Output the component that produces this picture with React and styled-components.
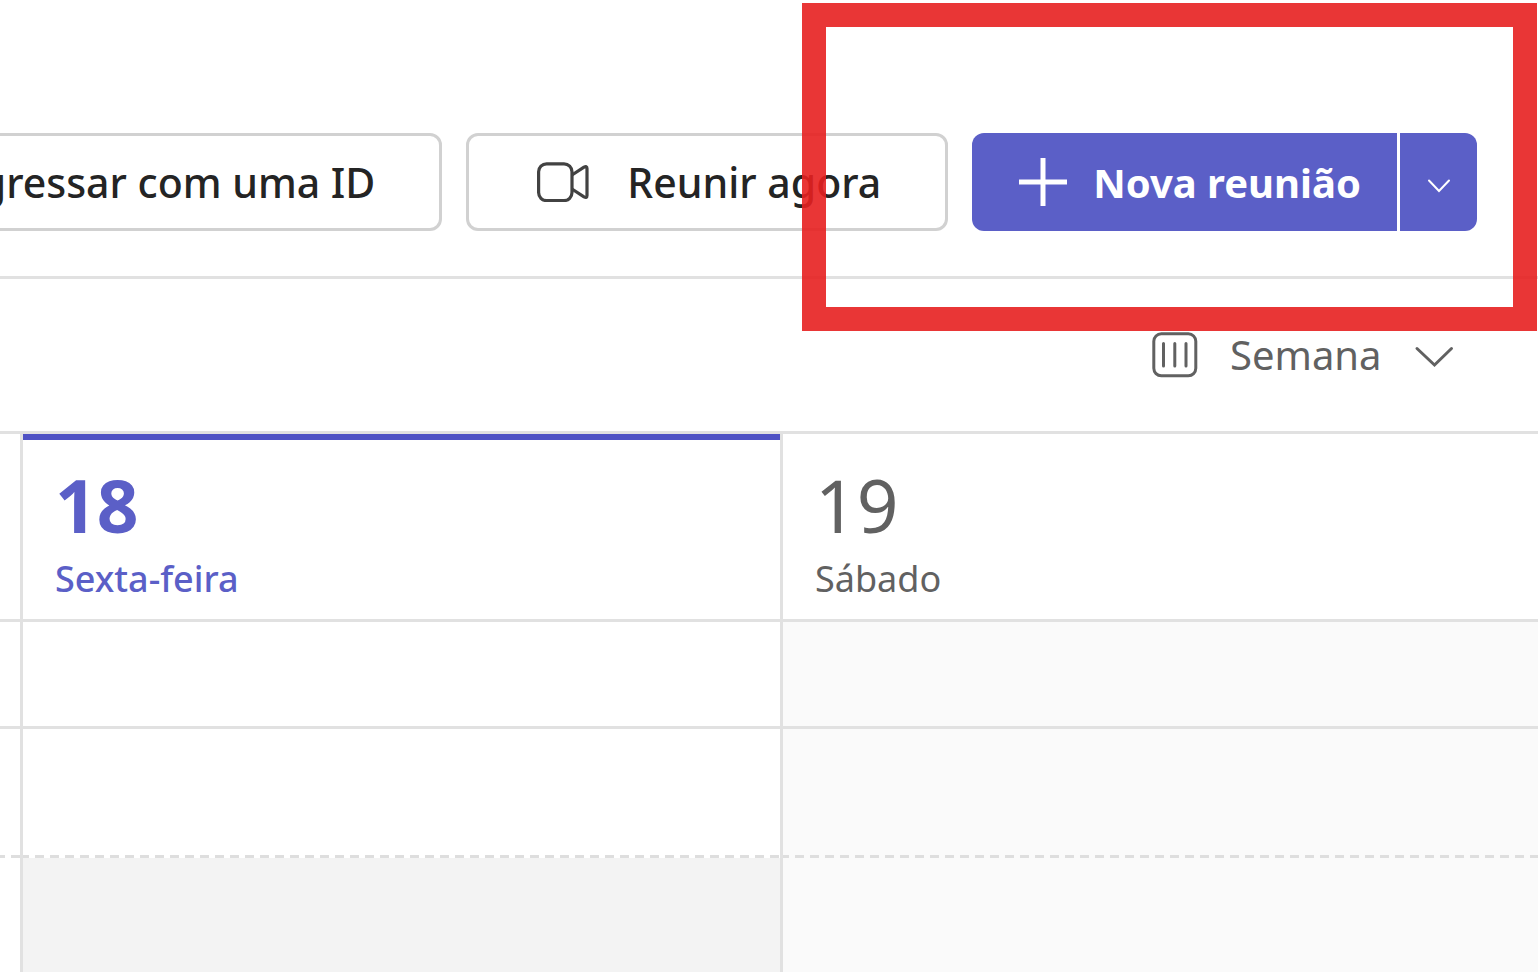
import styled, { createGlobalStyle } from "styled-components";
import { useState } from "react";

const GlobalStyle = createGlobalStyle`
  * {
    box-sizing: border-box;
  }
  body {
    margin: 0;
    background-color: #fff;
    font-family: "Segoe UI", "Noto Sans", "Open Sans", sans-serif;
    color: #242424;
  }
  button,
  select {
    font-family: inherit;
    cursor: pointer;
  }
`;

const Page = styled.div`
  position: relative;
  display: flex;
  flex-direction: column;
  min-height: 100vh;
  overflow: hidden;
`;

const Toolbar = styled.header`
  display: flex;
  justify-content: flex-end;
  gap: 24px;
  padding: 133px 61px 45px 0;
  border-bottom: 3px solid #e1e1e1;
`;

const Button = styled.button`
  display: flex;
  align-items: center;
  flex-shrink: 0;
  gap: 38px;
  height: 98px;
  padding: 0 64px 0 68px;
  border: 3px solid #d1d1d1;
  border-radius: 12px;
  background-color: #fff;
  color: #242424;
  font-size: 41px;
  font-weight: 500;
  white-space: nowrap;
`;

const SplitButton = styled.div`
  display: flex;
  flex-shrink: 0;
  height: 98px;
  border-radius: 12px;
  overflow: hidden;
  background-color: #5b5fc7;
`;

const SplitPart = styled.button`
  display: flex;
  align-items: center;
  justify-content: center;
  gap: 26px;
  padding: ${(props) => (props.$small ? "0" : "0 36px 0 47px")};
  width: ${(props) => (props.$small ? "80px" : "auto")};
  border: none;
  border-left: ${(props) => (props.$small ? "3px solid #fff" : "none")};
  background-color: transparent;
  color: #fff;
  font-size: 40px;
  font-weight: 700;
  white-space: nowrap;
`;

const ViewBar = styled.div`
  display: flex;
  justify-content: flex-end;
  align-items: center;
  height: 155px;
  padding-right: 84px;
  border-bottom: 3px solid #e1e1e1;
`;

const ViewPicker = styled.label`
  display: flex;
  align-items: center;
  color: #616161;
  svg {
    flex-shrink: 0;
  }
`;

const ViewSelect = styled.select`
  appearance: none;
  margin: 0 32px;
  padding: 0;
  border: none;
  background-color: transparent;
  color: #616161;
  font-size: 40px;
  line-height: 60px;
`;

const Calendar = styled.main`
  display: grid;
  grid-template-columns: 20px 760fr 758fr;
  flex: 1;
`;

const Day = styled.section`
  display: flex;
  flex-direction: column;
  border-left: ${(props) => (props.$gutter ? "none" : "3px solid #e1e1e1")};
`;

const DayHeader = styled.div`
  height: 188px;
  padding: 22px 32px 0;
  border-top: 6px solid ${(props) => (props.$today ? "#4f52c4" : "transparent")};
  border-bottom: 3px solid #e1e1e1;
  color: ${(props) => (props.$today ? "#5b5fc7" : "#616161")};
`;

const DayNumber = styled.div`
  font-size: 73px;
  line-height: 86px;
  font-weight: ${(props) => (props.$today ? 700 : 400)};
`;

const DayName = styled.div`
  font-size: 36px;
  line-height: 62px;
  font-weight: ${(props) => (props.$today ? 500 : 400)};
`;

const AllDay = styled.div`
  height: 107px;
  border-bottom: 3px solid #e1e1e1;
  background-color: ${(props) => (props.$off ? "#fafafa" : "#fff")};
`;

/* the dashes start on the column line, so the slot reaches under it */
const HalfHour = styled.div`
  height: 129px;
  margin-left: ${(props) => (props.$gutter ? "0" : "-3px")};
  border-left: ${(props) => (props.$gutter ? "none" : "3px solid #e1e1e1")};
  background-color: ${(props) => (props.$off ? "#fafafa" : "#fff")};
  background-image: repeating-linear-gradient(
    ${(props) => (props.$gutter ? "to left" : "to right")},
    #dedede 0 9px,
    transparent 9px 15px
  );
  background-origin: border-box;
  background-size: 100% 3px;
  background-position: bottom;
  background-repeat: no-repeat;
`;

const Rest = styled.div`
  flex: 1;
  background-color: ${(props) => props.$color};
`;

const Highlight = styled.div`
  position: absolute;
  top: 3px;
  right: 1px;
  width: 735px;
  height: 328px;
  border: 24px solid rgba(231, 32, 32, 0.9);
  pointer-events: none;
`;

const VideoIcon = () => (
  <svg width="52" height="40" viewBox="0 0 52 40" fill="none" stroke="#424242" strokeWidth="3.2" strokeLinejoin="round" aria-hidden="true">
    <rect x="1.6" y="1.8" width="33.4" height="36.8" rx="8" />
    <path d="M35 13 L47 5.2 Q50 3.6 50 6.5 V33.5 Q50 36.4 47 34.8 L35 27" />
  </svg>
);

const PlusIcon = () => (
  <svg width="48" height="48" viewBox="0 0 48 48" stroke="#fff" strokeWidth="5" aria-hidden="true">
    <path d="M24 0 V48 M0 24 H48" />
  </svg>
);

const WeekIcon = () => (
  <svg width="46" height="46" viewBox="0 0 46 46" fill="none" stroke="#616161" strokeWidth="3" strokeLinecap="round" aria-hidden="true">
    <rect x="1.8" y="1.8" width="42" height="42" rx="7.5" />
    <path d="M11.5 11.5 V34 M22.8 11.5 V34 M34 11.5 V34" />
  </svg>
);

const ChevronIcon = ({ size, stroke, path }) => (
  <svg width={size} height={size} viewBox={`0 0 ${size} ${size}`} fill="none" stroke="currentColor" strokeWidth={stroke} strokeLinecap="round" aria-hidden="true">
    <path d={path} />
  </svg>
);

const days = [
  { number: 18, name: "Sexta-feira", today: true, off: false, rest: "#f3f3f3" },
  { number: 19, name: "Sábado", today: false, off: true, rest: "#fafafa" },
];

export default function App() {
  const [view, setView] = useState("Semana");

  return (
    <Page>
      <GlobalStyle />
      <Toolbar>
        <Button>Ingressar com uma ID</Button>
        <Button>
          <VideoIcon />
          Reunir agora
        </Button>
        <SplitButton>
          <SplitPart>
            <PlusIcon />
            Nova reunião
          </SplitPart>
          <SplitPart $small aria-label="Mais opções">
            <ChevronIcon size={24} stroke={2} path="M2 10.5 L12 21 L22 10.5" />
          </SplitPart>
        </SplitButton>
      </Toolbar>
      <ViewBar>
        <ViewPicker>
          <WeekIcon />
          <ViewSelect
            aria-label="Vista"
            value={view}
            onChange={(e) => setView(e.target.value)}
          >
            <option>Semana</option>
          </ViewSelect>
          <ChevronIcon size={40} stroke={3} path="M3 13.5 L20.5 30 L37.5 13.5" />
        </ViewPicker>
      </ViewBar>
      <Calendar>
        <Day $gutter>
          <DayHeader />
          <AllDay />
          <HalfHour $gutter />
          <Rest $color="#fff" />
        </Day>
        {days.map((day) => (
          <Day key={day.number}>
            <DayHeader $today={day.today}>
              <DayNumber $today={day.today}>{day.number}</DayNumber>
              <DayName $today={day.today}>{day.name}</DayName>
            </DayHeader>
            <AllDay $off={day.off} />
            <HalfHour $off={day.off} />
            <Rest $color={day.rest} />
          </Day>
        ))}
      </Calendar>
      <Highlight />
    </Page>
  );
}
